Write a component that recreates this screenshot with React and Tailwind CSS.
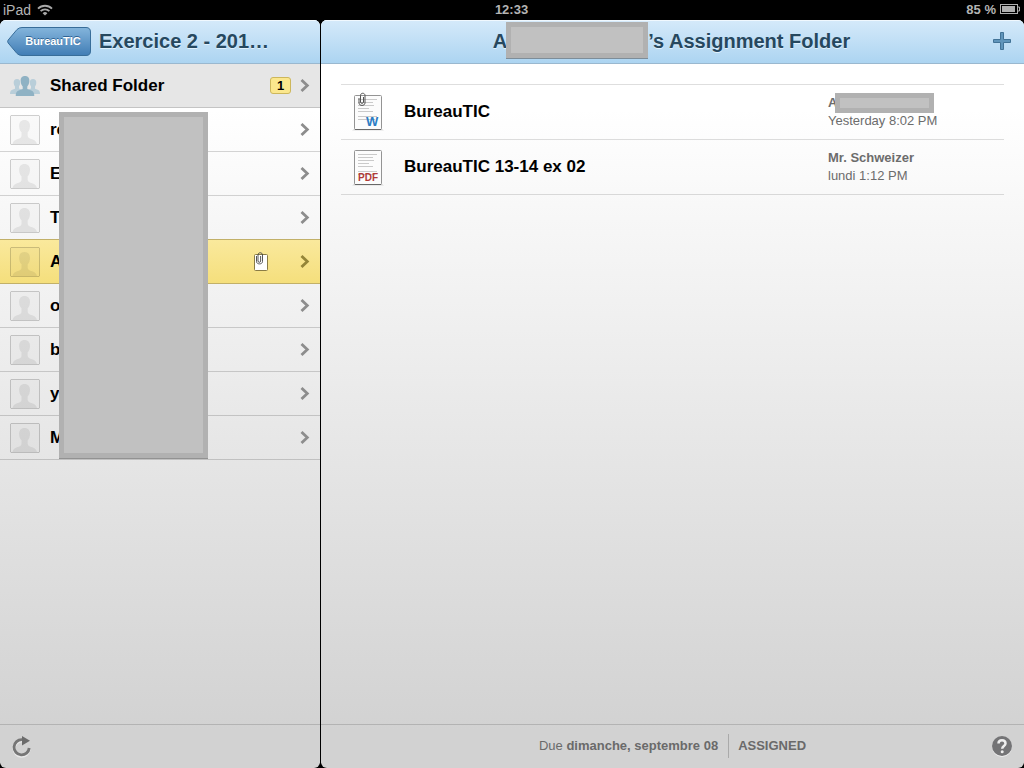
const students = [
  { name: 're' },
  { name: 'E' },
  { name: 'T' },
  { name: 'A', selected: true },
  { name: 'o' },
  { name: 'b' },
  { name: 'y' },
  { name: 'M' },
];

function Wifi() {
  return (
    <svg className="h-3 w-4" viewBox="0 0 16 12" fill="none" stroke="#a9a9a9" strokeWidth="1.8" aria-hidden="true">
      <path d="M1 4.6a10 10 0 0 1 14 0M3.6 7.2a6.3 6.3 0 0 1 8.8 0" />
      <path d="M8 11.6 5.6 9.3a3.4 3.4 0 0 1 4.8 0Z" fill="#a9a9a9" stroke="none" />
    </svg>
  );
}

function Battery() {
  return (
    <svg className="h-3 w-5" viewBox="0 0 20 12" aria-hidden="true">
      <rect x="0.5" y="0.5" width="17" height="9" fill="none" stroke="#b0b0b0" />
      <rect x="2" y="2" width="13" height="6" fill="#b0b0b0" />
      <path d="M18 3h1.500v4H18" fill="none" stroke="#b0b0b0" />
    </svg>
  );
}

function StatusBar() {
  return (
    <div className="grid h-5 shrink-0 grid-cols-3 items-center bg-black pr-1 pl-[3px] text-[13px] leading-5 text-[#b4b4b4]">
      <div className="flex items-center gap-[6px]">
        <span className="text-sm leading-5">iPad</span>
        <Wifi />
      </div>
      <div className="text-center font-bold">12:33</div>
      <div className="flex items-center justify-end gap-1 font-bold">
        <span>85 %</span>
        <Battery />
      </div>
    </div>
  );
}

function BackButton() {
  return (
    <button type="button" className="relative h-[29px] w-[84px] shrink-0 pl-2 text-[11px] font-bold text-white [text-shadow:0_-1px_0_#2f6394]">
      <svg className="absolute inset-0 h-full w-full" viewBox="0 0 84 29" aria-hidden="true">
        <defs>
          <linearGradient id="back" x1="0" y1="0" x2="0" y2="1">
            <stop offset="0" stopColor="#84b5dc" />
            <stop offset="1" stopColor="#417db5" />
          </linearGradient>
        </defs>
        <path d="M1.200 16Q0 14.500 1.200 13L10 2.500Q12 .5 15 .5H79Q83.500 .5 83.500 5V24Q83.500 28.500 79 28.500H15Q12 28.500 10 26.500Z" fill="url(#back)" stroke="#386d99" />
      </svg>
      <span className="relative">BureauTIC</span>
    </button>
  );
}

function Group() {
  return (
    <svg className="h-5 w-[30px] shrink-0" viewBox="0 0 30 20" aria-hidden="true">
      <g fill="#b9ced9">
        <path d="M7 3c2.500 0 3.500 1.700 3.200 4-.2 1.800-.7 2.600-1.200 3.300v2.200L13 14v4H0c0-3 .8-4 3-4.600l2-.7v-2.300C4 9.500 3.700 7.800 3.700 6.500 3.700 4.500 4.700 3 7 3Z" />
        <path d="M23 3c-2.500 0-3.500 1.700-3.200 4 .2 1.800.7 2.600 1.200 3.300v2.200L17 14v4h13c0-3-.8-4-3-4.600l-2-.7v-2.300c1-.9 1.300-2.600 1.300-3.900C26.300 4.500 25.300 3 23 3Z" />
      </g>
      <path d="M15 0c3.200 0 4.600 2.200 4.300 5.200-.2 2.500-1 4.200-2 5.200v2.500l4 1.500c2.200.8 3 2.500 3 5.600H5.700c0-3.100.8-4.800 3-5.600l4-1.500v-2.500c-1-1-1.800-2.700-2-5.200C10.400 2.200 11.800 0 15 0Z" fill="#8fb2c4" />
    </svg>
  );
}

function Avatar() {
  return (
    <svg className="h-[30px] w-[30px] shrink-0" viewBox="0 0 30 30" aria-hidden="true">
      <rect x="0.5" y="0.5" width="29" height="29" rx="1" fill="#000" fillOpacity="0.02" stroke="#000" strokeOpacity="0.18" />
      <path d="M14.500 5c3.700 0 5.700 2.500 5.500 6.300-.2 3-1 4.700-2.300 6v3.400c0 1.800 2 2.800 4.600 3.600 2.500.8 4 2 4.700 4.700H2.500c.5-2.700 2-3.900 4.500-4.700 2.600-.8 4.500-1.800 4.500-3.600v-3.400c-1.300-1.300-2.200-3-2.400-6C8.900 7.500 10.800 5 14.500 5Z" fill="#000" fillOpacity="0.07" />
    </svg>
  );
}

function Chevron({ color = '#8d8d8d' }) {
  return (
    <svg className="h-[14px] w-[10px] shrink-0" viewBox="0 0 10 14" fill="none" stroke={color} strokeWidth="2.800" aria-hidden="true">
      <path d="m1.500 1 5.800 5.500-5.800 5.500" />
    </svg>
  );
}

function ClippedNote() {
  return (
    <svg className="h-5 w-4 shrink-0" viewBox="0 0 16 20" aria-hidden="true">
      <rect x="2.500" y="2.500" width="13" height="16" rx="1" fill="#fff" stroke="#8a7c45" />
      <path d="M4.500 4v5.500c0 3.200 6 3.200 6 0V3c0-3-4.500-3-4.500 0v6c0 1.800 2.600 1.800 2.600 0V4" fill="none" stroke="#444" strokeWidth="0.900" />
    </svg>
  );
}

function FileIcon({ kind }) {
  const word = kind === 'W';
  return (
    <svg className="h-10 w-8 shrink-0" viewBox="0 0 32 40" role="img" aria-label={word ? 'Word document' : 'PDF document'}>
      <path d="M0 38.500 3 36h26l3 2.500Z" fill="#000" fillOpacity="0.120" />
      <rect x="2.500" y="3.500" width="27" height="34" rx="1" fill="#fcfcfc" stroke="#949494" />
      <path d="M3 37.500h26" stroke="#686868" />
      <path d="M6 7.500h19M6 10.500h15M6 13.500h16M6 16.500h11M6 19.500h15M6 24.500h19M6 27.500h17" stroke="#cacaca" />
      {word ? (
        <>
          <text x="14" y="34" fontFamily="Liberation Sans, sans-serif" fontWeight="700" fontSize="13" fill="#2b7cc5">W</text>
          <path d="M7 6v5c0 3.200 6 3.200 6 0V3.500C13 .5 8.500.5 8.500 3.500V10c0 1.800 3 1.800 3 0V5" fill="none" stroke="#555" />
        </>
      ) : (
        <text x="16" y="34" textAnchor="middle" fontFamily="Liberation Sans, sans-serif" fontWeight="700" fontSize="10" fill="#b13a37">PDF</text>
      )}
    </svg>
  );
}

function StudentRow({ name, selected }) {
  return (
    <li className={selected
      ? '-mt-px border-y border-[#c2b068] bg-linear-to-b from-[#fae99c] to-[#f5df7c]'
      : 'border-b border-black/16'}
    >
      <a href="#student" className="flex h-[43px] items-center px-[10px] text-[17px] font-bold text-black">
        <Avatar />
        <span className="ml-[10px] flex-1">{name}</span>
        {selected && <span className="mr-8"><ClippedNote /></span>}
        <Chevron color={selected ? '#948538' : '#8d8d8d'} />
      </a>
    </li>
  );
}

function Sidebar() {
  return (
    <aside className="flex w-80 shrink-0 flex-col overflow-hidden rounded-md bg-linear-to-b from-white from-12% to-[#d2d2d2] to-95%">
      <header className="flex h-11 shrink-0 items-center gap-2 border-b border-[#9ab8cf] bg-linear-to-b from-[#d5eafa] to-[#acd4f1] pb-px pl-[7px] shadow-[inset_0_1px_0_#f0f8fe]">
        <BackButton />
        <h1 className="text-xl font-bold text-[#26485f] [text-shadow:0_1px_0_#e0f1fd]">Exercice 2 - 201…</h1>
      </header>
      <a href="#shared" className="flex h-11 shrink-0 items-center border-b border-[#c4c4c4] bg-[#e6e6e6] px-[10px] text-[17px] font-bold text-black">
        <Group />
        <span className="ml-[10px] flex-1">Shared Folder</span>
        <span className="mr-[9px] h-[17px] w-[21px] rounded-[3px] border border-[#cdb75c] bg-[#fbe78d] text-center text-[13px] leading-[15px]">1</span>
        <Chevron />
      </a>
      <div className="relative">
        <ul>
          {students.map((student) => <StudentRow key={student.name} {...student} />)}
        </ul>
        <div className="absolute top-1 bottom-[2px] left-[59px] w-[149px] border-5 border-[#b1b1b1] bg-[#c1c1c1] shadow-[0_1px_0_#929292]" />
      </div>
      <footer className="mt-auto flex h-11 shrink-0 items-center border-t border-[#b3b3b3] px-3">
        <button type="button" aria-label="Refresh">
          <svg className="h-[22px] w-5" viewBox="0 0 20 22" aria-hidden="true">
            <path d="M17.200 13.500a7.600 7.600 0 1 1-7.200-8.300" fill="none" stroke="#fff" strokeOpacity="0.500" strokeWidth="2.800" />
            <path d="M17.200 12a7.600 7.600 0 1 1-7.200-8.300" fill="none" stroke="#767676" strokeWidth="2.800" />
            <path d="m10 0 8 4.800-8 4.700Z" fill="#6c6c6c" />
          </svg>
        </button>
      </footer>
    </aside>
  );
}

function FileRow({ kind, title, author, date, masked }) {
  return (
    <li className="flex h-[55px] items-center border-b border-black/13 pl-[11px]">
      <FileIcon kind={kind} />
      <a href="#file" className="ml-5 flex-1 text-[17px] font-bold text-black">{title}</a>
      <div className="w-44 text-[13px] leading-[18px] text-[#6c6c6c]">
        <div className="relative font-bold">
          {author}
          {masked && <span className="absolute -top-px left-[7px] h-5 w-[99px] border-5 border-[#b1b1b1] bg-[#c1c1c1]" />}
        </div>
        <div>{date}</div>
      </div>
    </li>
  );
}

function Folder() {
  return (
    <main className="flex min-w-0 flex-1 flex-col overflow-hidden rounded-md bg-linear-to-b from-white from-12% to-[#d2d2d2] to-95%">
      <header className="grid h-11 shrink-0 grid-cols-[44px_1fr_44px] items-center border-b border-[#9ab8cf] bg-linear-to-b from-[#d5eafa] to-[#acd4f1] pb-px shadow-[inset_0_1px_0_#f0f8fe]">
        <h2 className="col-start-2 flex items-center justify-center pr-[2px] text-xl font-bold text-[#26485f] [text-shadow:0_1px_0_#e0f1fd]">
          A
          <span className="-ml-px mb-[2px] h-9 w-[142px] border-5 border-[#b1b1b1] bg-[#c1c1c1] shadow-[0_1px_0_#7d8d99]" />
          ’s Assignment Folder
        </h2>
        <button type="button" aria-label="Add" className="flex justify-center">
          <svg className="h-[18px] w-[18px]" viewBox="0 0 18 18" aria-hidden="true">
            <path d="M7.500.5h3v7h7v3h-7v7h-3v-7h-7v-3h7Z" fill="#6095bb" stroke="#427397" />
          </svg>
        </button>
      </header>
      <ul className="mx-5 mt-5 border-t border-black/13">
        <FileRow kind="W" title="BureauTIC" author="A" date="Yesterday 8:02 PM" masked />
        <FileRow kind="PDF" title="BureauTIC 13-14 ex 02" author="Mr. Schweizer" date="lundi 1:12 PM" />
      </ul>
      <footer className="mt-auto grid h-11 shrink-0 grid-cols-[44px_1fr_44px] items-center border-t border-[#b3b3b3] pb-px text-[13px] text-[#6a6a6a]">
        <div className="col-start-2 flex items-center justify-center">
          <span>Due <b>dimanche, septembre 08</b></span>
          <b className="ml-[10px] border-l border-[#aaa] pl-[9px] leading-6">ASSIGNED</b>
        </div>
        <button type="button" aria-label="Help" className="flex justify-center">
          <svg className="h-[22px] w-[22px]" viewBox="0 0 22 22" aria-hidden="true">
            <circle cx="11" cy="12" r="10" fill="#eee" />
            <circle cx="11" cy="11" r="10" fill="#747476" />
            <path d="M7.500 8.500c0-4.500 7-4.500 7 0 0 2.500-3.300 2.500-3.300 5.200" fill="none" stroke="#eee" strokeWidth="2.500" />
            <circle cx="11.200" cy="16.700" r="1.500" fill="#eee" />
          </svg>
        </button>
      </footer>
    </main>
  );
}

export default function App() {
  return (
    <div className="flex min-h-screen flex-col bg-black font-['Liberation_Sans',Arial,sans-serif]">
      <StatusBar />
      <div className="flex flex-1 gap-px">
        <Sidebar />
        <Folder />
      </div>
    </div>
  );
}
